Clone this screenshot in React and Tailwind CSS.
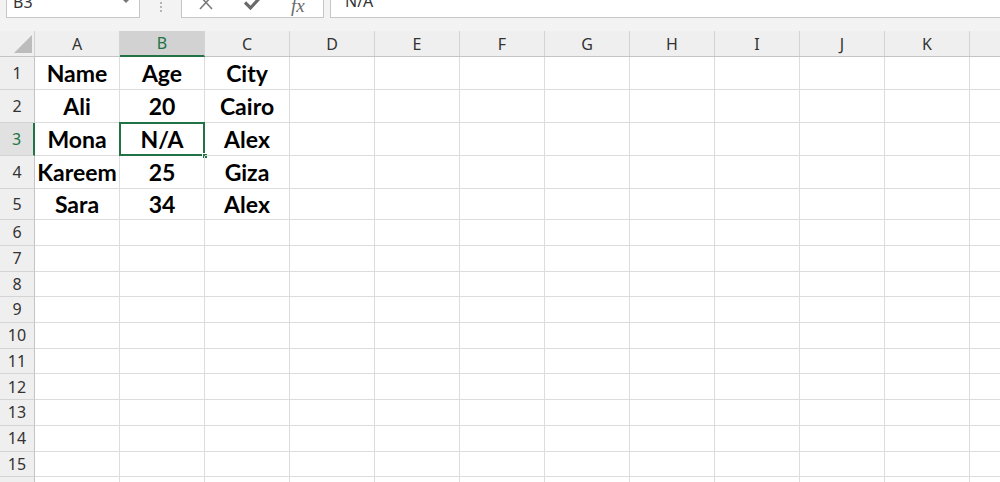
import React from 'react';

const COLS = ['A', 'B', 'C', 'D', 'E', 'F', 'G', 'H', 'I', 'J', 'K', 'L'];

const DATA = [
    ['Name', 'Age', 'City'],
    ['Ali', '20', 'Cairo'],
    ['Mona', 'N/A', 'Alex'],
    ['Kareem', '25', 'Giza'],
    ['Sara', '34', 'Alex'],
];

const headFont = { fontFamily: '"Noto Sans", "Open Sans", sans-serif' };
const cellFont = { fontFamily: 'Lato, "Liberation Sans", sans-serif' };

// selected cell is B3 (row index 3, col index 1)
const SEL_ROW = 3;
const SEL_COL = 1;

const FormulaBar = () => (
    <div className="h-[18px] flex items-end overflow-hidden bg-[#f3f3f3]" style={headFont}>
        {/* name box */}
        <div className="ml-[6px] w-[134px] h-[24px] bg-white border border-[#c6c6c6] flex items-center justify-between pl-[6px] pr-[9px]">
            <span className="text-[16px] text-[#333] leading-none -mt-[9px]">B3</span>
            <span className="w-0 h-0 border-l-[4px] border-r-[4px] border-t-[4px] border-l-transparent border-r-transparent border-t-[#777] -mt-[10px]" />
        </div>
        {/* dots */}
        <div className="w-[41px] h-full flex flex-col items-center gap-[2px] pt-[2px]">
            <span className="w-[2px] h-[2px] bg-[#b5b5b5]" />
            <span className="w-[2px] h-[2px] bg-[#b5b5b5]" />
            <span className="w-[2px] h-[2px] bg-[#b5b5b5]" />
        </div>
        {/* cancel / enter / fx */}
        <div className="w-[143px] h-[24px] bg-white border border-[#c6c6c6] flex items-start">
            <svg className="ml-[16px] mt-[1px]" width="16" height="14" viewBox="0 0 16 14">
                <path d="M2 0 L14 13 M14 0 L2 13" stroke="#7a7a7a" strokeWidth="1.6" fill="none" />
            </svg>
            <svg className="ml-[30px] mt-[1px]" width="18" height="15" viewBox="0 0 18 15">
                <path d="M1 6.5 L6.5 12 L17 0.5" stroke="#6a6a6a" strokeWidth="3.2" fill="none" />
            </svg>
            <span className="ml-[29px] mt-[1px] text-[19px] italic text-[#6a6a6a] leading-none" style={{ fontFamily: '"Liberation Serif", serif' }}>fx</span>
        </div>
        {/* formula input */}
        <div className="ml-[6px] flex-1 h-[24px] bg-white border border-[#c6c6c6] border-r-0 pl-[14px] flex items-center">
            <span className="text-[16px] text-[#333] leading-none -mt-[10px]">N/A</span>
        </div>
    </div>
);

const ColumnHeaders = () => (
    <div className="flex h-[26px] bg-[#efefef] border-b border-[#c4c4c4]" style={headFont}>
        <div className="w-[35px] shrink-0 border-r border-[#d4d4d4] relative">
            <svg className="absolute left-[14px] top-[4px]" width="18" height="18" viewBox="0 0 18 18">
                <path d="M18 0 L18 18 L0 18 Z" fill="#bcbcbc" />
            </svg>
        </div>
        {COLS.map((c, i) => (
            <div
                key={c}
                className={
                    i === SEL_COL
                        ? 'w-[85px] shrink-0 flex items-center justify-center text-[16px] text-[#217346] bg-[#d2d2d2] border-r border-[#d4d4d4] border-b-2 border-b-[#217346] -mb-px'
                        : 'w-[85px] shrink-0 flex items-center justify-center text-[16px] text-[#333] border-r border-[#d4d4d4]'
                }
            >
                {c}
            </div>
        ))}
    </div>
);

const Row = ({ n, height, values }) => {
    const isSelRow = n === SEL_ROW;
    return (
        <div className="flex" style={{ height }}>
            <div
                className={
                    isSelRow
                        ? 'w-[35px] shrink-0 bg-[#e1e1e1] border-b border-[#d4d4d4] border-r-2 border-r-[#217346] flex items-center justify-center text-[16px] text-[#217346]'
                        : 'w-[35px] shrink-0 bg-[#efefef] border-b border-[#d4d4d4] border-r border-r-[#c4c4c4] flex items-center justify-center text-[16px] text-[#333]'
                }
                style={headFont}
            >
                {n}
            </div>
            {COLS.map((c, i) => {
                const v = values ? values[i] : undefined;
                const sel = isSelRow && i === SEL_COL;
                return (
                    <div
                        key={c}
                        className="w-[85px] shrink-0 border-r border-b border-[#dcdcdc] relative flex items-center justify-center"
                    >
                        {v && (
                            <span className="text-[23px] font-bold text-black leading-none mt-[1px]" style={cellFont}>
                                {v}
                            </span>
                        )}
                        {sel && (
                            <>
                                <div className="absolute -left-px -top-px -right-px -bottom-px border-2 border-[#217346]" />
                                <div className="absolute -right-[4px] -bottom-[4px] w-[6px] h-[6px] bg-[#217346] border border-white" />
                            </>
                        )}
                    </div>
                );
            })}
        </div>
    );
};

export default function App() {
    return (
        <div className="w-[1000px] h-[482px] overflow-hidden bg-white">
            <FormulaBar />
            <div className="h-[13px] bg-[#f3f3f3]" />
            <ColumnHeaders />
            {DATA.map((vals, i) => (
                <Row key={i} n={i + 1} height={i === 4 ? 31 : 33} values={vals} />
            ))}
            {Array.from({ length: 11 }, (_, i) => (
                <Row key={i + 6} n={i + 6} height={i % 3 === 1 ? 26 : 25.6} />
            ))}
        </div>
    );
}
